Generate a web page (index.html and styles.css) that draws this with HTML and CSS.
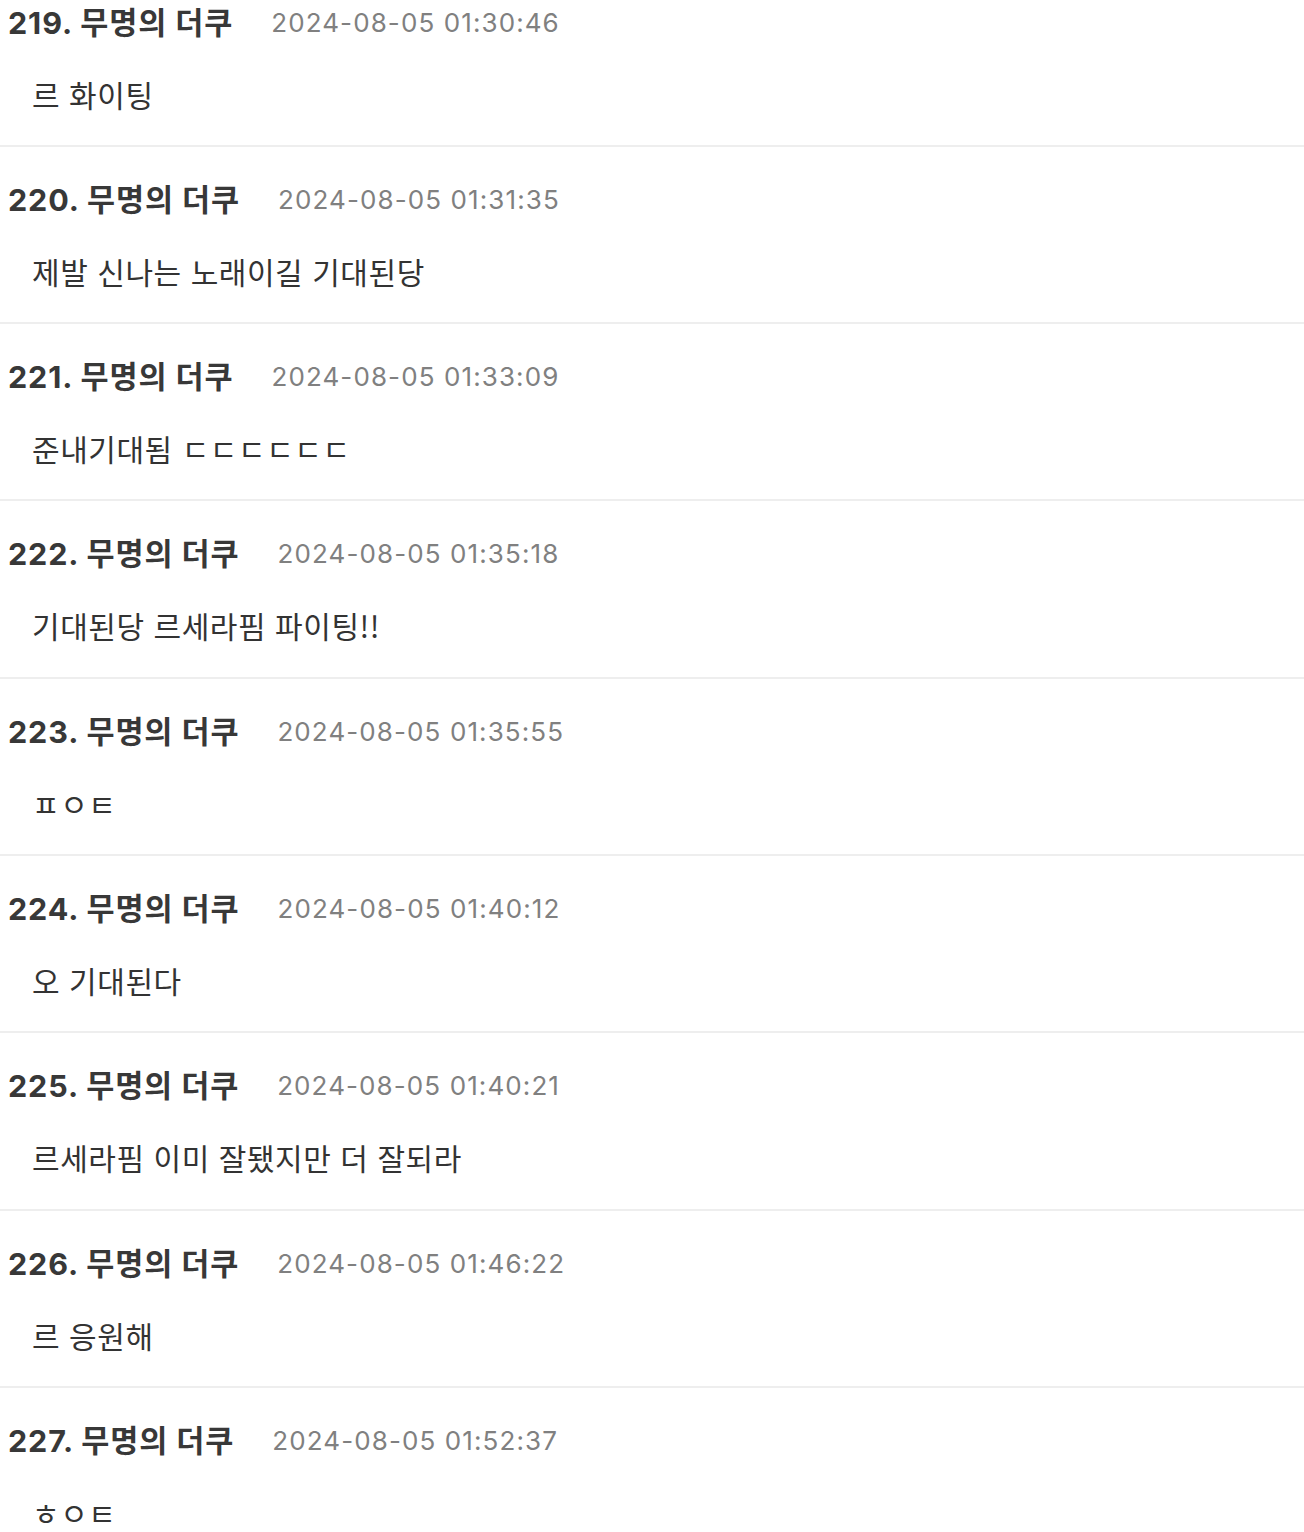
FILE: index.html
```html
<!DOCTYPE html>
<html lang="ko">
<head>
<meta charset="utf-8">
<title>댓글</title>
<link rel="stylesheet" href="styles.css">
</head>
<body>
<ul class="comments">
  <li class="comment">
    <div class="comment-head"><span class="name">219. 무명의 더쿠</span><span class="date">2024-08-05 01:30:46</span></div>
    <p class="comment-body">르 화이팅</p>
  </li>
  <li class="comment">
    <div class="comment-head"><span class="name">220. 무명의 더쿠</span><span class="date">2024-08-05 01:31:35</span></div>
    <p class="comment-body">제발 신나는 노래이길 기대된당</p>
  </li>
  <li class="comment">
    <div class="comment-head"><span class="name">221. 무명의 더쿠</span><span class="date">2024-08-05 01:33:09</span></div>
    <p class="comment-body">준내기대됨 ㄷㄷㄷㄷㄷㄷ</p>
  </li>
  <li class="comment">
    <div class="comment-head"><span class="name">222. 무명의 더쿠</span><span class="date">2024-08-05 01:35:18</span></div>
    <p class="comment-body">기대된당 르세라핌 파이팅!!</p>
  </li>
  <li class="comment">
    <div class="comment-head"><span class="name">223. 무명의 더쿠</span><span class="date">2024-08-05 01:35:55</span></div>
    <p class="comment-body">ㅍㅇㅌ</p>
  </li>
  <li class="comment">
    <div class="comment-head"><span class="name">224. 무명의 더쿠</span><span class="date">2024-08-05 01:40:12</span></div>
    <p class="comment-body">오 기대된다</p>
  </li>
  <li class="comment">
    <div class="comment-head"><span class="name">225. 무명의 더쿠</span><span class="date">2024-08-05 01:40:21</span></div>
    <p class="comment-body">르세라핌 이미 잘됐지만 더 잘되라</p>
  </li>
  <li class="comment">
    <div class="comment-head"><span class="name">226. 무명의 더쿠</span><span class="date">2024-08-05 01:46:22</span></div>
    <p class="comment-body">르 응원해</p>
  </li>
  <li class="comment">
    <div class="comment-head"><span class="name">227. 무명의 더쿠</span><span class="date">2024-08-05 01:52:37</span></div>
    <p class="comment-body">ㅎㅇㅌ</p>
  </li>
</ul>
</body>
</html>
```

FILE: styles.css
```css
html, body {
  margin: 0;
  padding: 0;
  background: #ffffff;
}

body {
  overflow: hidden;
  font-family: "Inter", "Noto Sans CJK KR", sans-serif;
  color: #333333;
}

.comments {
  list-style: none;
  margin: 0;
  padding: 0;
}

.comment {
  padding: 31px 0 31.3px 8px;
  border-bottom: 2px solid #eeeeee;
}

.comment:first-child {
  padding-top: 0.5px;
}

.comment-head {
  display: flex;
  align-items: center;
  height: 40px;
  gap: 38px;
}

.name {
  font-size: 30.5px;
  font-weight: 700;
  letter-spacing: 0.9px;
  color: #383838;
  white-space: nowrap;
}

.date {
  font-size: 26px;
  color: #808080;
  letter-spacing: 1.1px;
  padding-top: 3px;
  white-space: nowrap;
}

.comment-body {
  margin: 33px 0 0 24px;
  height: 40px;
  line-height: 40px;
  font-family: "Noto Sans CJK KR", "Inter", sans-serif;
  font-size: 30px;
  letter-spacing: 0.55px;
  color: #333333;
}
```
